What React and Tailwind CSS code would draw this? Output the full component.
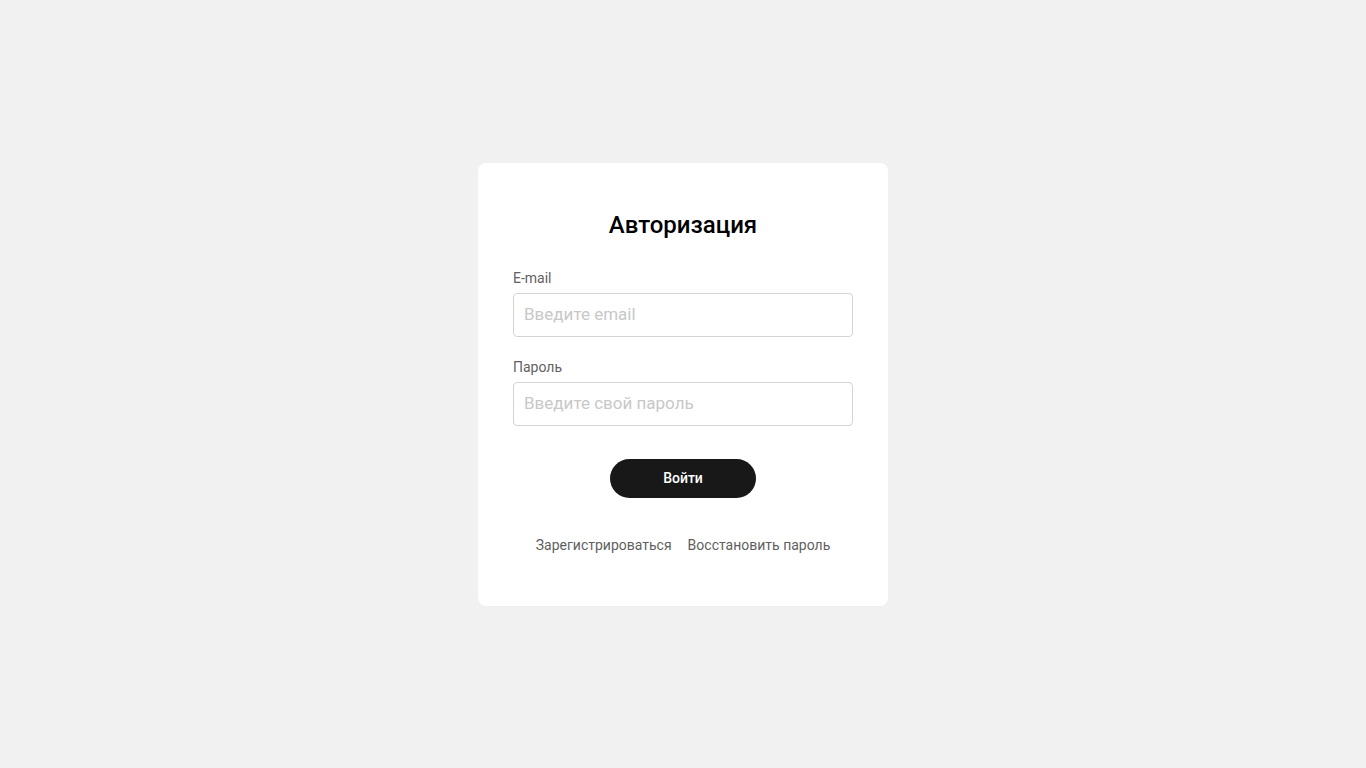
export default function App() {
  return (
    <div className="min-h-screen bg-[#f1f1f1] flex items-center justify-center" style={{ fontFamily: 'Roboto, "Noto Sans", sans-serif' }}>
      <div className="w-[410px] bg-white rounded-lg px-[35px] pt-[46px] pb-[51px]">
        <h1 className="text-center text-[24px] leading-[32px] font-medium text-black">Авторизация</h1>

        <form className="mt-[27px]" onSubmit={(e) => e.preventDefault()}>
          <label className="block text-[14px] leading-[20px] text-[#616161]">E-mail</label>
          <input
            type="email"
            placeholder="Введите email"
            className="mt-[5px] block w-full h-[44px] rounded border border-[#d4d4d4] px-[10px] pb-[2px] text-[17px] text-[#333] placeholder:text-[#c8c8c8] outline-none"
          />

          <label className="mt-[20px] block text-[14px] leading-[20px] text-[#616161]">Пароль</label>
          <input
            type="password"
            placeholder="Введите свой пароль"
            className="mt-[5px] block w-full h-[44px] rounded border border-[#d4d4d4] px-[10px] pb-[2px] text-[17px] text-[#333] placeholder:text-[#c8c8c8] outline-none"
          />

          <div className="mt-[33px] flex justify-center">
            <button type="submit" className="w-[146px] h-[39px] rounded-full bg-[#181818] text-white text-[14px] font-medium">
              Войти
            </button>
          </div>
        </form>

        <div className="mt-[37px] flex justify-center gap-[16px] text-[14px] leading-[20px] text-[#5f5f5f]">
          <a href="#">Зарегистрироваться</a>
          <a href="#">Восстановить пароль</a>
        </div>
      </div>
    </div>
  )
}
